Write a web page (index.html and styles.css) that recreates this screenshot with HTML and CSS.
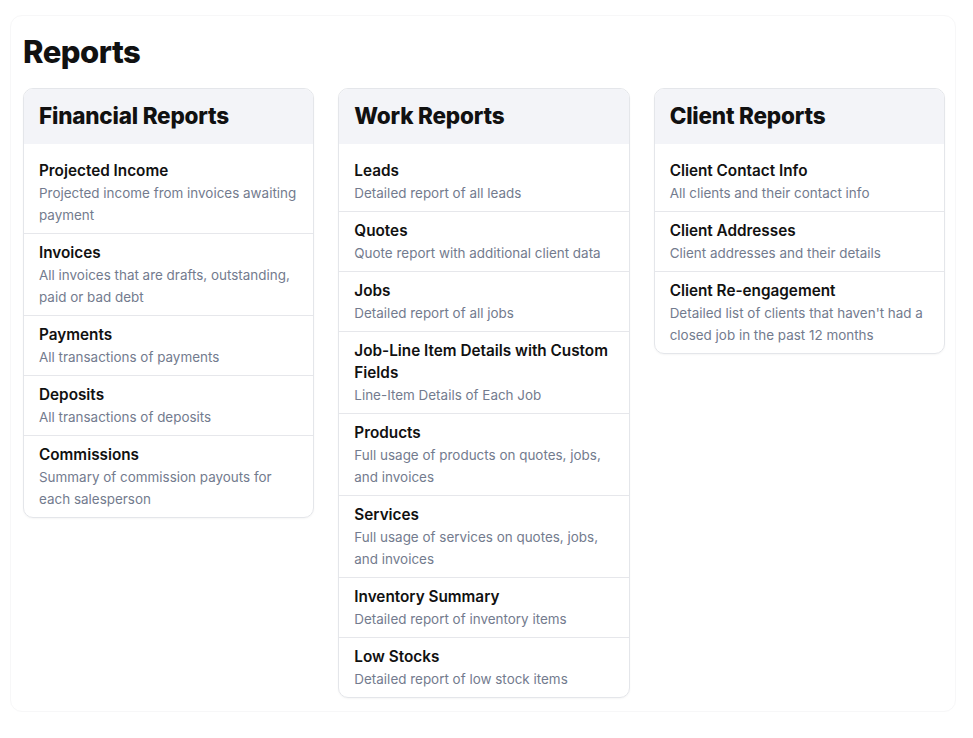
FILE: index.html
```html
<!DOCTYPE html>
<html lang="en">
<head>
    <meta charset="UTF-8">
    <meta name="viewport" content="width=device-width, initial-scale=1.0">
    <title>Reports</title>
    <link rel="stylesheet" href="styles.css">
</head>
<body>
    <div class="page">
        <h1>Reports</h1>

        <div class="columns">
            <div class="card">
                <h2>Financial Reports</h2>
                <ul class="reports">
                    <li>
                        <strong>Projected Income</strong>
                        <span>Projected income from invoices awaiting payment</span>
                    </li>
                    <li>
                        <strong>Invoices</strong>
                        <span>All invoices that are drafts, outstanding, paid or bad debt</span>
                    </li>
                    <li>
                        <strong>Payments</strong>
                        <span>All transactions of payments</span>
                    </li>
                    <li>
                        <strong>Deposits</strong>
                        <span>All transactions of deposits</span>
                    </li>
                    <li>
                        <strong>Commissions</strong>
                        <span>Summary of commission payouts for each salesperson</span>
                    </li>
                </ul>
            </div>

            <div class="card">
                <h2>Work Reports</h2>
                <ul class="reports">
                    <li>
                        <strong>Leads</strong>
                        <span>Detailed report of all leads</span>
                    </li>
                    <li>
                        <strong>Quotes</strong>
                        <span>Quote report with additional client data</span>
                    </li>
                    <li>
                        <strong>Jobs</strong>
                        <span>Detailed report of all jobs</span>
                    </li>
                    <li>
                        <strong>Job-Line Item Details with Custom Fields</strong>
                        <span>Line-Item Details of Each Job</span>
                    </li>
                    <li>
                        <strong>Products</strong>
                        <span>Full usage of products on quotes, jobs, and invoices</span>
                    </li>
                    <li>
                        <strong>Services</strong>
                        <span>Full usage of services on quotes, jobs, and invoices</span>
                    </li>
                    <li>
                        <strong>Inventory Summary</strong>
                        <span>Detailed report of inventory items</span>
                    </li>
                    <li>
                        <strong>Low Stocks</strong>
                        <span>Detailed report of low stock items</span>
                    </li>
                </ul>
            </div>

            <div class="card">
                <h2>Client Reports</h2>
                <ul class="reports">
                    <li>
                        <strong>Client Contact Info</strong>
                        <span>All clients and their contact info</span>
                    </li>
                    <li>
                        <strong>Client Addresses</strong>
                        <span>Client addresses and their details</span>
                    </li>
                    <li>
                        <strong>Client Re-engagement</strong>
                        <span>Detailed list of clients that haven't had a closed job in the past 12 months</span>
                    </li>
                </ul>
            </div>
        </div>
    </div>
</body>
</html>
```

FILE: styles.css
```css
body {
    font-family: Inter, "Noto Sans", sans-serif;
    background-color: #ffffff;
    color: #111111;
    margin: 0;
    padding: 15px 17px 20px 10px;
}
.page {
    border: 1px solid #f7f7f8;
    border-radius: 12px;
    padding: 0 10px 13px 12px;
}
h1 {
    font-size: 31px;
    font-weight: 800;
    letter-spacing: -0.5px;
    margin: 0;
    padding: 16px 0 16px 0;
    line-height: 40px;
}
.columns {
    display: grid;
    grid-template-columns: repeat(3, 1fr);
    gap: 24px;
    align-items: start;
}
.card {
    border: 1px solid #e4e6ea;
    border-radius: 10px;
    overflow: hidden;
    box-shadow: 0 1px 2px rgba(0, 0, 0, 0.04);
}
.card h2 {
    background-color: #f3f4f8;
    font-size: 22.5px;
    font-weight: 800;
    letter-spacing: -0.2px;
    margin: 0;
    padding: 0 15px 1px 15px;
    line-height: 54px;
}
.reports {
    list-style: none;
    margin: 0;
    padding: 8px 0 0 0;
}
.reports li {
    padding: 8px 15px 7px 15px;
    border-top: 1px solid #e6e7eb;
}
.reports li:first-child {
    border-top: none;
}
.reports strong {
    display: block;
    font-size: 15.3px;
    font-weight: 600;
    line-height: 22px;
}
.reports span {
    display: block;
    font-size: 13.45px;
    color: #737b8e;
    line-height: 22px;
}
```
